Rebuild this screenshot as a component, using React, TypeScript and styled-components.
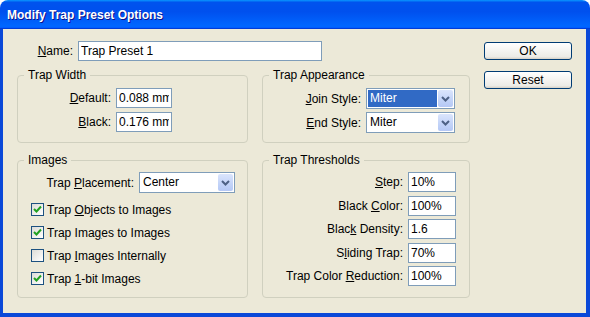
import React from 'react'
import styled, { createGlobalStyle } from 'styled-components'

const GlobalStyle = createGlobalStyle`
  html, body {
    margin: 0;
    padding: 0;
    background: #fff;
  }
  body {
    font-family: "Liberation Sans", Arial, sans-serif;
    font-size: 12px;
    color: #000;
  }
`

const Window = styled.div`
  width: 590px;
  height: 317px;
  display: flex;
  flex-direction: column;
`

const TitleBar = styled.div`
  flex: none;
  height: 29px;
  box-sizing: border-box;
  padding: 1px 0 0 7px;
  border-radius: 8px 8px 0 0;
  background: linear-gradient(
    180deg,
    #0997ff 0%,
    #0053ee 8%,
    #0050ee 40%,
    #0066ff 88%,
    #0066ff 93%,
    #005bff 95%,
    #003dd7 96%,
    #003dd7 100%
  );
  color: #fff;
  font-weight: 700;
  font-size: 12px;
  line-height: 28px;
  text-shadow: 1px 1px #0f1089;
`

const Frame = styled.div`
  flex: 1;
  display: flex;
  gap: 14px;
  padding: 12px 14px 0 14px;
  background: #ece9d8;
  border-style: solid;
  border-width: 0 4px 4px 3px;
  border-color: #0a48d8;
`

const Main = styled.div`
  width: 453px;
  display: flex;
  flex-direction: column;
  gap: 14px;
`

const Side = styled.div`
  width: 88px;
  display: flex;
  flex-direction: column;
  gap: 11px;
  padding-top: 1px;
`

const Button = styled.button`
  width: 88px;
  height: 18px;
  box-sizing: border-box;
  padding: 0;
  border: 1px solid #003c74;
  border-radius: 3px;
  background: linear-gradient(180deg, #fff 0%, #ecebe6 86%, #d6d0c5 100%);
  font-family: inherit;
  font-size: 12px;
  color: #000;
`

const Groups = styled.div`
  display: grid;
  grid-template-columns: 231px 208px;
  grid-template-rows: 68px 138px;
  column-gap: 14px;
  row-gap: 17px;
`

const GroupBox = styled.div`
  box-sizing: border-box;
  border: 1px solid #d0d0bf;
  border-radius: 4px;
  display: flex;
  flex-direction: column;
`

const Legend = styled.span`
  align-self: flex-start;
  margin: -8px 0 0 6px;
  padding: 0 4px;
  line-height: 14px;
  background: #ece9d8;
`

const Stack = styled.div<{ $top: number; $gap: number }>`
  display: flex;
  flex-direction: column;
  padding-top: ${p => p.$top}px;
  gap: ${p => p.$gap}px;
`

const FieldRow = styled.div`
  display: flex;
  align-items: center;
  gap: 5px;
`

const Label = styled.label<{ $w: number }>`
  width: ${p => p.$w}px;
  text-align: right;
  white-space: nowrap;
`

const U = styled.span`
  text-decoration: underline;
  text-underline-offset: 1px;
`

const TextBox = styled.input<{ $w: number }>`
  width: ${p => p.$w}px;
  height: 20px;
  box-sizing: border-box;
  border: 1px solid #7f9db9;
  padding: 0 2px;
  margin: 0;
  background: #fff;
  font-family: inherit;
  font-size: 12px;
  color: #000;
  outline: none;
`

const Combo = styled.div<{ $w: number }>`
  width: ${p => p.$w}px;
  height: 21px;
  box-sizing: border-box;
  border: 1px solid #7f9db9;
  padding: 1px;
  background: #fff;
  display: flex;
  gap: 1px;
`

const ComboValue = styled.span<{ $selected?: boolean }>`
  flex: 1;
  padding-left: 2px;
  line-height: 17px;
  background: ${p => (p.$selected ? '#316ac5' : 'transparent')};
  color: ${p => (p.$selected ? '#fff' : '#000')};
`

const ComboArrow = styled.span`
  width: 15px;
  border-radius: 2px;
  background: linear-gradient(180deg, #dbe5fc 0%, #c2d3f8 60%, #b5c8f5 100%);
  display: flex;
  align-items: center;
  justify-content: center;
`

const CheckList = styled.div`
  display: flex;
  flex-direction: column;
  margin-top: 5px;
  padding-left: 13px;
`

const CheckRow = styled.label`
  height: 23px;
  display: flex;
  align-items: center;
  gap: 3px;
`

const Box = styled.span`
  width: 13px;
  height: 13px;
  box-sizing: border-box;
  border: 1px solid #1c5180;
  background: linear-gradient(135deg, #dcdcd7 0%, #fff 100%);
  display: flex;
  align-items: center;
  justify-content: center;
`

const Chevron = () => (
  <svg width="9" height="6" viewBox="0 0 9 6">
    <polyline points="1,1 4.5,4.5 8,1" fill="none" stroke="#4d6185" strokeWidth="2" />
  </svg>
)

const Select = ({ w, value, selected }: { w: number; value: string; selected?: boolean }) => (
  <Combo $w={w}>
    <ComboValue $selected={selected}>{value}</ComboValue>
    <ComboArrow>
      <Chevron />
    </ComboArrow>
  </Combo>
)

const Check = ({ on, children }: { on: boolean; children: React.ReactNode }) => (
  <CheckRow>
    <Box>
      {on && (
        <svg width="9" height="9" viewBox="0 0 9 9">
          <polyline points="1,4 3.5,6.5 8,1.5" fill="none" stroke="#21a121" strokeWidth="2" />
        </svg>
      )}
    </Box>
    <span>{children}</span>
  </CheckRow>
)

const thresholds: [React.ReactNode, string][] = [
  [<><U>S</U>tep:</>, '10%'],
  [<>Black <U>C</U>olor:</>, '100%'],
  [<>Blac<U>k</U> Density:</>, '1.6'],
  [<>S<U>l</U>iding Trap:</>, '70%'],
  [<>Trap Color <U>R</U>eduction:</>, '100%'],
]

const App = () => (
  <React.Fragment>
    <GlobalStyle />
    <Window>
      <TitleBar>Modify Trap Preset Options</TitleBar>
      <Frame>
        <Main>
          <FieldRow>
            <Label $w={56}><U>N</U>ame:</Label>
            <TextBox $w={244} readOnly value="Trap Preset 1" />
          </FieldRow>

          <Groups>
            <GroupBox>
              <Legend>Trap Width</Legend>
              <Stack $top={6} $gap={4}>
                <FieldRow>
                  <Label $w={93}><U>D</U>efault:</Label>
                  <TextBox $w={56} readOnly value="0.088 mm" />
                </FieldRow>
                <FieldRow>
                  <Label $w={93}><U>B</U>lack:</Label>
                  <TextBox $w={56} readOnly value="0.176 mm" />
                </FieldRow>
              </Stack>
            </GroupBox>

            <GroupBox>
              <Legend>Trap Appearance</Legend>
              <Stack $top={6} $gap={3}>
                <FieldRow>
                  <Label $w={98}><U>J</U>oin Style:</Label>
                  <Select w={89} value="Miter" selected />
                </FieldRow>
                <FieldRow>
                  <Label $w={98}><U>E</U>nd Style:</Label>
                  <Select w={89} value="Miter" />
                </FieldRow>
              </Stack>
            </GroupBox>

            <GroupBox>
              <Legend>Images</Legend>
              <Stack $top={5} $gap={0}>
                <FieldRow>
                  <Label $w={116}>Trap <U>P</U>lacement:</Label>
                  <Select w={96} value="Center" />
                </FieldRow>
                <CheckList>
                  <Check on>Trap <U>O</U>bjects to Images</Check>
                  <Check on>Trap Ima<U>g</U>es to Images</Check>
                  <Check on={false}>Trap <U>I</U>mages Internally</Check>
                  <Check on>Trap <U>1</U>-bit Images</Check>
                </CheckList>
              </Stack>
            </GroupBox>

            <GroupBox>
              <Legend>Trap Thresholds</Legend>
              <Stack $top={5} $gap={3.5}>
                {thresholds.map(([label, value], i) => (
                  <FieldRow key={i}>
                    <Label $w={140}>{label}</Label>
                    <TextBox $w={48} readOnly value={value} />
                  </FieldRow>
                ))}
              </Stack>
            </GroupBox>
          </Groups>
        </Main>

        <Side>
          <Button>OK</Button>
          <Button>Reset</Button>
        </Side>
      </Frame>
    </Window>
  </React.Fragment>
)

export default App
